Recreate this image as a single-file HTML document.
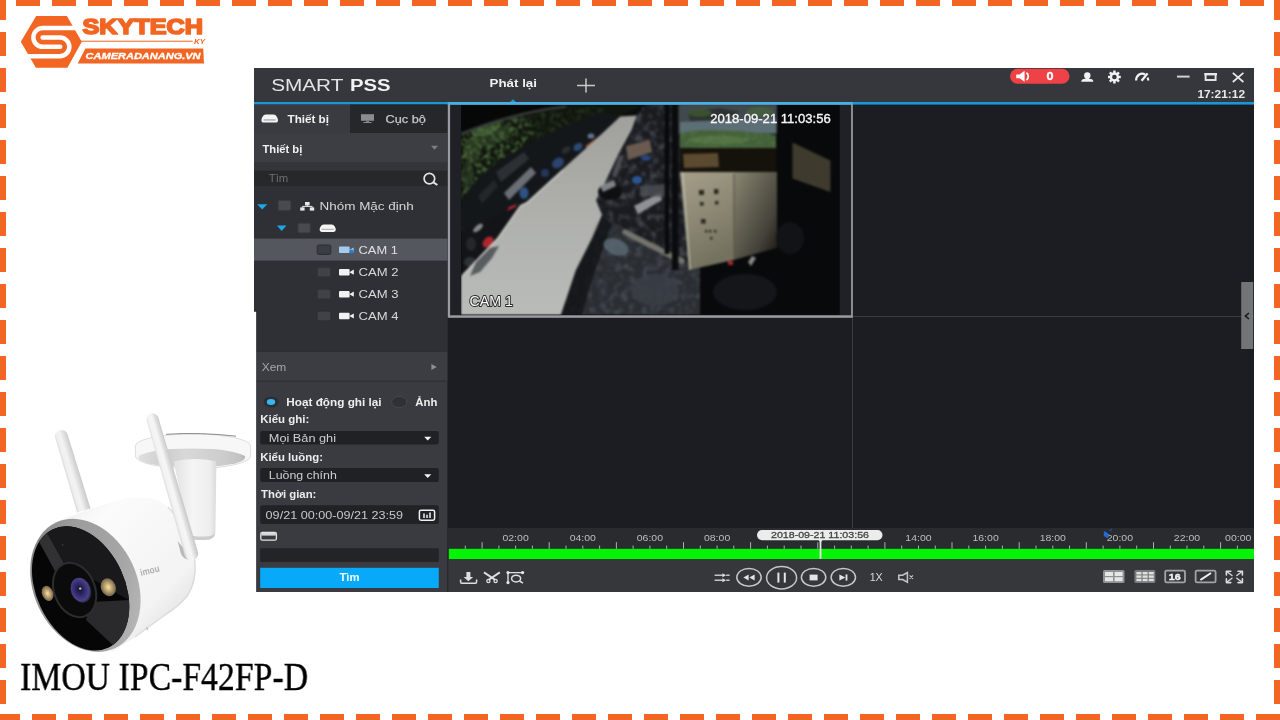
<!DOCTYPE html>
<html lang="vi">
<head>
<meta charset="utf-8">
<title>SmartPSS - IMOU IPC-F42FP-D</title>
<style>
*{box-sizing:border-box;margin:0;padding:0}
html,body{width:1280px;height:720px;overflow:hidden;background:#fff}
body{position:relative;font-family:"Liberation Sans",sans-serif;color:#d8d8d8}
.abs{position:absolute}
svg.abs,#caption{will-change:transform}
/* dashed frame */
.dash{position:absolute;--o:#f26522}
.dash.t{left:16px;top:0;width:1248px;height:6px;background:repeating-linear-gradient(90deg,var(--o) 0 24px,transparent 24px 36px)}
.dash.b{left:-4px;top:714px;width:1284px;height:6px;background:repeating-linear-gradient(90deg,var(--o) 0 24px,transparent 24px 36px)}
.dash.l{left:0;top:-4px;width:6px;height:724px;background:repeating-linear-gradient(180deg,var(--o) 0 24px,transparent 24px 36px)}
.dash.r{left:1274px;top:-4px;width:6px;height:724px;background:repeating-linear-gradient(180deg,var(--o) 0 24px,transparent 24px 36px)}
#caption{position:absolute;left:19.5px;top:654px;transform:scaleX(.866);-webkit-text-stroke:.4px #000;font-family:"Liberation Serif",serif;font-size:39px;color:#000;white-space:nowrap;transform-origin:0 0}
</style>
</head>
<body>
<div class="dash t"></div><div class="dash b"></div><div class="dash l"></div><div class="dash r"></div>

<svg class="abs" id="logo" style="left:0;top:0" width="230" height="80" viewBox="0 0 230 80">
<polygon points="20.8,41.7 36.2,16 66.9,16 81.8,41.7 67.4,67.8 35.9,67.8" fill="#f26522"/>
<path d="M78,28 H42.8 A9.4,9.4 0 0 0 42.8,46.8 H60.2" fill="none" stroke="#fff" stroke-width="4.5" stroke-linecap="round"/>
<path d="M42.6,37.5 H60 A9.35,9.35 0 0 1 60,56.2 H26" fill="none" stroke="#fff" stroke-width="4.5" stroke-linecap="round"/>
<text x="82.4" y="33.9" font-family="Liberation Sans, sans-serif" font-weight="bold" font-size="21.4" fill="#f26522" stroke="#f26522" stroke-width="1.7" stroke-linejoin="round" textLength="120.6" lengthAdjust="spacingAndGlyphs">SKYTECH</text>
<rect x="80" y="40.7" width="112.6" height="1" fill="#f26522"/>
<text x="194" y="44" font-family="Liberation Sans, sans-serif" font-weight="bold" font-style="italic" font-size="6.6" fill="#f26522" textLength="11" lengthAdjust="spacingAndGlyphs">KY</text>
<polygon points="85.4,48.5 203.2,48.5 204,63.6 77.7,63.6" fill="#f26522"/>
<text x="85.6" y="59.2" font-family="Liberation Sans, sans-serif" font-weight="bold" font-style="italic" font-size="8.4" fill="#fff" stroke="#fff" stroke-width="0.3" textLength="115" lengthAdjust="spacingAndGlyphs">CAMERADANANG.VN</text>
</svg>
<svg class="abs" id="appsvg" style="left:0;top:0" width="1280" height="720" viewBox="0 0 1280 720" font-family="Liberation Sans, sans-serif">
<defs>
<clipPath id="appclip"><path d="M254,68 H1254 V592 H256.4 V311.5 H254 Z"/></clipPath>
</defs>
<g clip-path="url(#appclip)">
<!-- main background -->
<rect x="254" y="68" width="1000" height="524" fill="#1b1d22"/>
<!-- title bar -->
<rect x="254" y="68" width="1000" height="35" fill="#35373c"/>
<rect x="254" y="102" width="1000" height="2.6" fill="#1d97d4"/>
<polygon points="509.5,102.5 513,99.3 516.5,102.5" fill="#1d97d4"/>
<text x="271.2" y="90.9" font-size="16" fill="#e4e4e4" textLength="72.2" lengthAdjust="spacingAndGlyphs">SMART</text>
<text x="350" y="90.9" font-size="16" font-weight="bold" fill="#f2f2f2" textLength="40.6" lengthAdjust="spacingAndGlyphs">PSS</text>
<text x="489.5" y="87" font-size="11" font-weight="bold" fill="#f0f0f0" textLength="47.5" lengthAdjust="spacingAndGlyphs">Phát lại</text>
<path d="M577,85.6 H595 M586,78.6 V92.6" stroke="#c9c9c9" stroke-width="1.5" fill="none"/>
<!-- alarm pill -->
<rect x="1010" y="68.8" width="59.5" height="15" rx="7.5" fill="#ee4246"/>
<path d="M1016.2,74.4 h3.4 l5,-3.6 v11 l-5,-3.6 h-3.4 z" fill="#fff"/>
<path d="M1026.4,72.8 a4.4,4.4 0 0 1 0,7.2" stroke="#fff" stroke-width="1.7" fill="none"/>
<text x="1046.4" y="79.8" font-size="10.6" font-weight="bold" fill="#fff" stroke="#fff" stroke-width="0.4" textLength="7" lengthAdjust="spacingAndGlyphs">0</text>
<!-- user -->
<circle cx="1087.3" cy="75.5" r="3.2" fill="#f2f2f2"/>
<rect x="1085.6" y="77.4" width="3.4" height="2.4" fill="#f2f2f2"/>
<path d="M1081.2,81.7 q0.2,-2.9 4,-3 h4.2 q3.8,0.1 4,3 z" fill="#f2f2f2"/>
<!-- gear -->
<g transform="translate(1114.4,77)" fill="none" stroke="#f2f2f2">
<circle r="3.5" stroke-width="2.4"/>
<path d="M0,-6.4V-4M0,6.4V4M-6.4,0H-4M6.4,0H4M-4.55,-4.55L-2.9,-2.9M4.55,4.55L2.9,2.9M-4.55,4.55L-2.9,2.9M4.55,-4.55L2.9,-2.9" stroke-width="2.5"/>
</g>
<!-- gauge -->
<g fill="none" stroke="#f2f2f2" stroke-width="2.2">
<path d="M1136.1,80.6 A6,7 0 0 1 1145.2,74.6"/>
<path d="M1147.6,77.6 A6,7 0 0 1 1148.2,80.6"/>
<path d="M1141.6,80.8 L1147.6,73.4" stroke-width="2.3"/>
</g>
<!-- window buttons -->
<rect x="1177" y="75.6" width="12.6" height="2" fill="#d0d0d0"/>
<rect x="1205.6" y="74" width="10" height="6" fill="none" stroke="#e8e8e8" stroke-width="1.9"/>
<rect x="1204.4" y="73" width="12.6" height="2.4" fill="#e8e8e8"/>
<path d="M1232.8,72.8 L1243.4,82 M1243.4,72.8 L1232.8,82" stroke="#e8e8e8" stroke-width="1.7" fill="none"/>
<text x="1197.4" y="98.4" font-size="10.4" font-weight="bold" fill="#e8e8e8" textLength="47.6" lengthAdjust="spacingAndGlyphs">17:21:12</text>

<!-- sidebar -->
<rect x="254" y="104.6" width="193.4" height="488" fill="#393b40"/>
<rect x="350" y="104.6" width="97.4" height="28.4" fill="#25272b"/>
<rect x="254" y="133" width="193.4" height="29.5" fill="#3c3e43"/>
<rect x="254" y="162.5" width="193.4" height="8" fill="#33353a"/>
<rect x="254" y="170.5" width="193.4" height="16" fill="#26282c"/>
<rect x="254" y="186.5" width="193.4" height="165" fill="#2e3035"/>
<rect x="254" y="238.6" width="193.4" height="22" fill="#54575e"/>
<rect x="254" y="351.3" width="193.4" height="30" fill="#3b3d42"/>
<rect x="254" y="351" width="193.4" height="1" fill="#2c2e32"/>
<rect x="254" y="380.6" width="193.4" height="1" fill="#2c2e32"/>
<!-- tabs -->
<path d="M261.4,120.4 q0,-2 1.2,-3.6 q1,-2.4 3.4,-2.4 h7.4 q2.4,0 3.4,2.4 q1.2,1.6 1.2,3.6 q0,2.2 -2.2,2.2 h-12.2 q-2.2,0 -2.2,-2.2 z" fill="#f4f4f4"/>
<rect x="263.6" y="119.4" width="12" height="1.1" fill="#9a9a9a"/>
<text x="287.5" y="122.6" font-size="11.4" font-weight="bold" fill="#f2f2f2" textLength="41.5" lengthAdjust="spacingAndGlyphs">Thiết bị</text>
<rect x="361" y="114.2" width="13" height="6.6" fill="#8a8c90"/>
<rect x="366" y="120.8" width="3" height="1.4" fill="#77797d"/>
<rect x="363.4" y="122" width="8.2" height="1" fill="#8a8c90"/>
<text x="385.6" y="122.6" font-size="11.4" fill="#c8c8c8" stroke="#c8c8c8" stroke-width="0.25" textLength="40.2" lengthAdjust="spacingAndGlyphs">Cục bộ</text>
<text x="262.5" y="152.6" font-size="11.4" font-weight="bold" fill="#f2f2f2" textLength="39.8" lengthAdjust="spacingAndGlyphs">Thiết bị</text>
<polygon points="431,145.8 438,145.8 434.5,149.8" fill="#7c7e82"/>
<!-- search -->
<text x="268.8" y="182.4" font-size="10.5" fill="#6e7074" textLength="19.5" lengthAdjust="spacingAndGlyphs">Tìm</text>
<circle cx="429.4" cy="178.6" r="5.3" fill="none" stroke="#e2e2e2" stroke-width="1.7"/>
<path d="M433.4,182.4 L437.4,185" stroke="#e2e2e2" stroke-width="2" fill="none"/>
<!-- tree -->
<polygon points="257.2,204.2 267.2,204.2 262.2,209.6" fill="#1ea7e8"/>
<rect x="278.2" y="200.4" width="12.6" height="10" rx="1.5" fill="#484a4f" stroke="#3a3c41" stroke-width="1"/>
<g fill="#e8e8e8"><rect x="305" y="202" width="4.6" height="3.4"/><rect x="300.2" y="207.4" width="4.4" height="3.2"/><rect x="309.8" y="207.4" width="4.4" height="3.2"/><path d="M307.3,205 v1.6 M302.4,207.6 v-1.2 h9.8 v1.2" stroke="#e8e8e8" stroke-width="1" fill="none"/></g>
<text x="319.5" y="210" font-size="11.5" fill="#d6d6d6" textLength="94.3" lengthAdjust="spacingAndGlyphs">Nhóm Mặc định</text>
<polygon points="277,225.6 286.4,225.6 281.7,230.9" fill="#1ea7e8"/>
<rect x="298" y="223.2" width="12.2" height="9.6" rx="1.5" fill="#484a4f" stroke="#3a3c41" stroke-width="1"/>
<path d="M319.6,229.8 q0,-1.8 1.1,-3.2 q0.9,-2.1 3,-2.1 h8 q2.1,0 3,2.1 q1.1,1.4 1.1,3.2 q0,2.1 -2.1,2.1 h-12 q-2.1,0 -2.1,-2.1 z" fill="#f4f4f4"/>
<rect x="321.6" y="228.8" width="12.2" height="1" fill="#aaa"/>
<!-- cam rows -->
<rect x="317.2" y="245" width="13.6" height="9.4" rx="1.5" fill="#3b3d44" stroke="#2b2d32" stroke-width="1"/>
<rect x="339" y="246.6" width="10.6" height="6.4" rx="1" fill="#a4cbec"/><polygon points="349.6,249.8 353.6,247.4 353.6,252.6" fill="#a4cbec"/><circle cx="351.6" cy="251.6" r="2" fill="#1f7fe0"/>
<text x="358.6" y="253.5" font-size="11" fill="#e0e0e0" textLength="39.2" lengthAdjust="spacingAndGlyphs">CAM 1</text>
<g id="camrow2">
<rect x="317.4" y="267.6" width="13.2" height="9.2" rx="1.5" fill="#404247" stroke="#33353a" stroke-width="1"/>
<rect x="339" y="269" width="10.6" height="6.4" rx="1" fill="#f2f2f2"/><polygon points="349.4,272.2 353.8,269.6 353.8,274.8" fill="#f2f2f2"/>
<text x="358.6" y="276" font-size="11" fill="#d8d8d8" textLength="40" lengthAdjust="spacingAndGlyphs">CAM 2</text>
</g>
<g transform="translate(0,22)">
<rect x="317.4" y="267.6" width="13.2" height="9.2" rx="1.5" fill="#404247" stroke="#33353a" stroke-width="1"/>
<rect x="339" y="269" width="10.6" height="6.4" rx="1" fill="#f2f2f2"/><polygon points="349.4,272.2 353.8,269.6 353.8,274.8" fill="#f2f2f2"/>
<text x="358.6" y="276" font-size="11" fill="#d8d8d8" textLength="40" lengthAdjust="spacingAndGlyphs">CAM 3</text>
</g>
<g transform="translate(0,43.8)">
<rect x="317.4" y="267.6" width="13.2" height="9.2" rx="1.5" fill="#404247" stroke="#33353a" stroke-width="1"/>
<rect x="339" y="269" width="10.6" height="6.4" rx="1" fill="#f2f2f2"/><polygon points="349.4,272.2 353.8,269.6 353.8,274.8" fill="#f2f2f2"/>
<text x="358.6" y="276" font-size="11" fill="#d8d8d8" textLength="40" lengthAdjust="spacingAndGlyphs">CAM 4</text>
</g>
<!-- Xem -->
<text x="261.7" y="370.8" font-size="10.8" fill="#a4a6aa" textLength="24.6" lengthAdjust="spacingAndGlyphs">Xem</text>
<polygon points="431.4,364 436.8,367 431.4,370" fill="#8c8e92"/>
<!-- radios -->
<ellipse cx="271.2" cy="402" rx="7.6" ry="5.6" fill="#2c2e33"/>
<ellipse cx="271" cy="402" rx="4.2" ry="3" fill="#38b6f2"/>
<text x="286.3" y="405.6" font-size="11.2" font-weight="bold" fill="#eeeeee" textLength="95.3" lengthAdjust="spacingAndGlyphs">Hoạt động ghi lại</text>
<ellipse cx="399.2" cy="402" rx="7.6" ry="5.6" fill="#2f3136" stroke="#44464b" stroke-width="1"/>
<text x="415.3" y="405.6" font-size="11.2" font-weight="bold" fill="#eeeeee" textLength="22" lengthAdjust="spacingAndGlyphs">Ảnh</text>
<!-- form -->
<text x="260.2" y="423.4" font-size="11.2" font-weight="bold" fill="#ececec" textLength="49.2" lengthAdjust="spacingAndGlyphs">Kiểu ghi:</text>
<rect x="260.2" y="431" width="178.6" height="13.6" rx="2" fill="#1f2125"/>
<text x="268.8" y="441.9" font-size="11" fill="#cfcfcf" textLength="67.2" lengthAdjust="spacingAndGlyphs">Mọi Bản ghi</text>
<polygon points="424.2,436.7 431.3,436.7 427.7,440.4" fill="#f4f4f4"/>
<text x="260.2" y="460.6" font-size="11.2" font-weight="bold" fill="#ececec" textLength="62.8" lengthAdjust="spacingAndGlyphs">Kiểu luồng:</text>
<rect x="260.2" y="468" width="178.6" height="14" rx="2" fill="#1f2125"/>
<text x="268.8" y="479" font-size="11" fill="#cfcfcf" textLength="68" lengthAdjust="spacingAndGlyphs">Luồng chính</text>
<polygon points="424.2,474.2 431.3,474.2 427.7,477.9" fill="#f4f4f4"/>
<text x="261" y="498" font-size="11.2" font-weight="bold" fill="#ececec" textLength="55.4" lengthAdjust="spacingAndGlyphs">Thời gian:</text>
<rect x="260.2" y="505.2" width="178.6" height="18.8" rx="2" fill="#202226"/>
<text x="265.6" y="519.2" font-size="11.8" fill="#c8c8c8" textLength="137.5" lengthAdjust="spacingAndGlyphs">09/21 00:00-09/21 23:59</text>
<rect x="419.4" y="510.2" width="15.2" height="10" rx="1.6" fill="none" stroke="#f0f0f0" stroke-width="1.5"/>
<path d="M424,513.4 v4.6 M427,514.8 v3.2 M430,512.6 v5.4" stroke="#e8e8e8" stroke-width="1.6" fill="none"/>
<rect x="260.8" y="532.4" width="15.6" height="7.8" rx="1.5" fill="none" stroke="#e4e4e4" stroke-width="1.3"/>
<rect x="261.4" y="533" width="14.4" height="2.6" fill="#d8d8d8"/>
<rect x="260.2" y="548.2" width="178.6" height="13.8" rx="1" fill="#222428"/>
<rect x="260.2" y="567.8" width="178.6" height="20.2" fill="#08a9f8"/>
<text x="339.4" y="581.2" font-size="11" font-weight="bold" fill="#f4fbff" textLength="20" lengthAdjust="spacingAndGlyphs">Tìm</text>

<!-- video grid -->
<rect x="852" y="104.6" width="1" height="424" fill="#3b3d41"/>
<rect x="448" y="316" width="806" height="1" fill="#393b3f"/>
<!-- video cell -->
<defs>
<clipPath id="vclip"><rect x="461" y="105" width="378.6" height="209.8"/></clipPath>
<filter id="vblur" color-interpolation-filters="sRGB" x="-5%" y="-5%" width="110%" height="110%"><feGaussianBlur stdDeviation="0.9"/></filter>
<filter id="leaf" color-interpolation-filters="sRGB" x="0" y="0" width="100%" height="100%">
<feTurbulence type="fractalNoise" baseFrequency="0.22" numOctaves="2" seed="7" result="n"/>
<feColorMatrix in="n" type="matrix" values="0 0 0 0 0.33  0 0 0 0 0.46  0 0 0 0 0.26  0 3.4 0 0 -1.45" result="c"/>
<feComposite in="c" in2="SourceGraphic" operator="in"/>
</filter>
<filter id="speck" color-interpolation-filters="sRGB" x="0" y="0" width="100%" height="100%">
<feTurbulence type="fractalNoise" baseFrequency="0.14" numOctaves="3" seed="3" result="n"/>
<feColorMatrix in="n" type="matrix" values="0 0 0 0 0.5  0 0 0 0 0.53  0 0 0 0 0.57  2.6 0 0 0 -1.15" result="c"/>
<feComposite in="c" in2="SourceGraphic" operator="in"/>
</filter>
<linearGradient id="road" x1="0" y1="0" x2="0" y2="1"><stop offset="0" stop-color="#a0a19c"/><stop offset="0.45" stop-color="#aeafab"/><stop offset="1" stop-color="#babcba"/></linearGradient>
<linearGradient id="boxL" x1="0" y1="0" x2="0.3" y2="1"><stop offset="0" stop-color="#a6a08a"/><stop offset="1" stop-color="#74725f"/></linearGradient>
<linearGradient id="boxR" x1="0" y1="0" x2="1" y2="1"><stop offset="0" stop-color="#8a8672"/><stop offset="0.7" stop-color="#45433a"/><stop offset="1" stop-color="#16150f"/></linearGradient>
</defs>
<rect x="447.8" y="104" width="405" height="213.8" fill="#9a9ca1"/>
<rect x="450.1" y="104.6" width="401" height="210.7" fill="#1f2126"/>
<rect x="447.8" y="102" width="405" height="2.6" fill="#46b0e6"/>
<g clip-path="url(#vclip)">
<rect x="461" y="105" width="379" height="210" fill="#0c0d0e"/>
<g filter="url(#vblur)">
<!-- trees -->
<polygon points="461,131 553,104 645,104 622,116 596,138 560,150 520,172 498,196 480,222 461,240" fill="#10150e"/>
<polygon points="461,134 520,114 536,122 528,150 504,170 488,190 474,214 461,232" fill="#fff" filter="url(#leaf)" opacity=".8"/>
<polygon points="520,114 600,106 610,116 560,140 528,150 536,122" fill="#fff" filter="url(#leaf)" opacity=".28"/>
<ellipse cx="492" cy="136" rx="20" ry="9" fill="#3f5a33" opacity=".45" transform="rotate(-18 492 136)"/>
<ellipse cx="472" cy="150" rx="9" ry="13" fill="#48663a" opacity=".4"/>
<ellipse cx="486" cy="128" rx="16" ry="7" fill="#5c8048" opacity=".45" transform="rotate(-20 486 128)"/>
<ellipse cx="468" cy="176" rx="6" ry="16" fill="#2c3c24" opacity=".6"/>
<!-- top-left black + roof arc -->
<polygon points="461,104 560,104 461,132" fill="#060707"/>
<path d="M461,133.8 Q512,112.6 566,106.6" stroke="#3a3d3e" stroke-width="2.2" fill="none"/>
<!-- vehicles strip along road -->
<polygon points="622,116 596,140 563,169 527,202 520,205 497,238 462,275 461,200 478,178 500,160 536,140 575,122 600,112" fill="#14171a"/>
<polygon points="504,193 531,167 536,173 509,200" fill="#6a6f75"/>
<polygon points="496,172 524,152 529,159 501,182" fill="#2c2f34"/>
<polygon points="478,196 494,180 498,186 482,204" fill="#23262a"/>
<ellipse cx="524" cy="193" rx="4.6" ry="6" fill="#2f5282"/>
<ellipse cx="558" cy="163" rx="6.4" ry="4.8" fill="#2a446e" transform="rotate(-35 558 163)"/>
<ellipse cx="545" cy="173" rx="4" ry="4" fill="#22385c"/>
<ellipse cx="578" cy="147" rx="5" ry="3.6" fill="#2c4a74" transform="rotate(-35 578 147)"/>
<ellipse cx="591" cy="136" rx="3.4" ry="2.6" fill="#5f7890"/>
<ellipse cx="566" cy="150" rx="5" ry="3" fill="#2a2d31" transform="rotate(-35 566 150)"/>
<path d="M586,147 L613.5,127.5" stroke="#a0563c" stroke-width="2.2" fill="none"/>
<polygon points="509,207 517,204 513,212 506,214" fill="#b0283a"/>
<!-- left bottom bikes -->
<polygon points="461,232 520,205 497,238 462,276" fill="#121417"/>
<ellipse cx="488" cy="242" rx="6.4" ry="4.4" fill="#b02630" transform="rotate(-45 488 242)"/>
<ellipse cx="478" cy="228" rx="6" ry="2.6" fill="#85878a" transform="rotate(-40 478 228)"/>
<ellipse cx="470" cy="262" rx="6" ry="5" fill="#2e3237"/>
<ellipse cx="471" cy="244" rx="5" ry="7" fill="#24272b"/>
<!-- road -->
<polygon points="620.3,116.6 637,115.4 632,129.5 618.6,154 605.5,182 600,205 602.2,215 592.4,238 576,270.6 561,315 461,315 461,276 497.2,237.8 520.2,205 526.8,201.7 562.8,169 595.7,139.6" fill="url(#road)"/>
<path d="M463,275 L497.4,239 L520.4,206 L527,203 L563,170" stroke="#dadbd8" stroke-width="1.2" fill="none" opacity=".8"/>
<polygon points="476,262 490,248 499,246 492,258 480,272 470,276" fill="#3a3f44" opacity=".75"/>
<polygon points="596,222 590,240 574,272 566,300 574,300 584,268 598,238 602,222" fill="#a09a90" opacity=".55"/>
<!-- wet ground -->
<polygon points="602.2,215 592.4,238 576,270.6 561,315 700,315 700,262 683,262 650,244 620,225" fill="#2a2e33"/>
<polygon points="602.2,215 592.4,238 576,270.6 561,315 700,315 700,262 683,262 650,244 620,225" fill="#fff" filter="url(#speck)" opacity=".32"/>
<polygon points="602.2,215 592.4,238 576,270.6 561,315 582,315 592,280 604,246 612,224" fill="#121417" opacity=".85"/>
<ellipse cx="616" cy="247" rx="13" ry="8" fill="#5d6c77" opacity=".8" transform="rotate(20 616 247)"/>
<ellipse cx="655" cy="290" rx="24" ry="16" fill="#3b4047" opacity=".8"/>
<!-- motorcycle pile -->
<polygon points="637,115 632,129.5 618.6,154 605.5,182 596,200 602,215 620,225 650,244 683,262 690,262 684,172 680,140 680,104 645,104" fill="#191b1f"/>
<polygon points="637,115 632,129.5 618.6,154 605.5,182 596,200 602,215 620,225 650,244 683,262 690,262 684,172 680,140 680,104 645,104" fill="#fff" filter="url(#speck)" opacity=".42"/>
<polygon points="626,146 650,140 652,152 628,160" fill="#6a5a50"/>
<polygon points="612,175 620,155 624,156 616,178" fill="#4a4c50"/>
<ellipse cx="610" cy="192" rx="12" ry="8" fill="#0e0f11"/>
<polygon points="600,186 614,180 616,186 603,192" fill="#7f8387"/>
<polygon points="634,206 660,193 662,200 638,214" fill="#8e9296"/>
<ellipse cx="637" cy="180" rx="5" ry="4" fill="#2d5594"/>
<ellipse cx="646" cy="158" rx="5" ry="3" fill="#27457c"/>
<polygon points="640,186 665,184 665,197 640,196" fill="#4d5258" opacity=".8"/>
<path d="M625,232 L652,246 L682,261" stroke="#74746c" stroke-width="5.5" fill="none" stroke-linecap="round"/>
<!-- roof / background top right -->
<rect x="678" y="104" width="100" height="30" fill="#40494d"/>
<polygon points="680,122 776,118 776,133 680,134" fill="#5d6f76"/>
<polygon points="688,112 720,108 740,112 720,120 690,121" fill="#2c3230"/>
<ellipse cx="700" cy="113" rx="12" ry="4" fill="#3e5830" opacity=".8"/>
<ellipse cx="760" cy="112" rx="14" ry="5" fill="#4a6a3a" opacity=".6"/>
<!-- green plants -->
<polygon points="680,133 700,130 740,131 776,135 776,148 680,148" fill="#43603a"/>
<polygon points="680,133 700,130 740,131 776,135 776,148 680,148" fill="#fff" filter="url(#leaf)" opacity=".6"/>
<ellipse cx="718" cy="140" rx="30" ry="4.4" fill="#7a9c5c" opacity=".3"/>
<!-- box -->
<polygon points="680,148 776,148 776,172 680,172" fill="#15120c"/>
<polygon points="683,154 718,153 719,167 684,168" fill="#5c4a30"/>
<polygon points="680,172 734,172 734,260 689,270 684,215" fill="url(#boxL)"/>
<polygon points="734,172 777,172 777,248 734,260" fill="url(#boxR)"/>
<path d="M682.4,172 L686,216 L690,270" stroke="#c2c2b4" stroke-width="1.6" fill="none" opacity=".8"/>
<path d="M734,174 V258" stroke="#5a584c" stroke-width="1.2"/>
<g fill="#2a2a24"><rect x="699" y="190" width="5" height="5"/><rect x="714" y="189" width="4.4" height="5"/><rect x="700" y="202" width="3.6" height="3.6"/><rect x="715" y="201" width="3.4" height="3.4"/><rect x="701" y="219" width="4.6" height="4.6"/><rect x="705" y="230" width="2.4" height="2.4"/><rect x="709" y="230" width="2.4" height="2.4"/><rect x="714" y="230" width="2.4" height="2.4"/><rect x="710" y="237" width="2.4" height="2.4"/></g>
<!-- pole -->
<rect x="664.6" y="104" width="4.6" height="150" fill="#08090a"/>
<rect x="672" y="104" width="6.4" height="166" fill="#0a0b0c"/>
<!-- right dark + wall -->
<polygon points="777,104 840,104 840,315 700,315 700,268 734,260 777,248" fill="#08090a"/>
<polygon points="792.5,142.5 830.4,160.6 830.4,192 792.5,178.6" fill="#3e3b2e"/>
<ellipse cx="745" cy="292" rx="32" ry="18" fill="#14161a"/>
<ellipse cx="790" cy="238" rx="14" ry="16" fill="#121316"/>
<polygon points="748,262 752,256 756,258 751,266" fill="#8a8a84"/>
<rect x="728" y="261" width="5" height="4" fill="#a02a2a"/>
</g>
<!-- OSD text -->
<text x="710.3" y="122.6" font-size="12.4" fill="#f6f6f6" stroke="#f6f6f6" stroke-width="0.35" textLength="120.4" lengthAdjust="spacingAndGlyphs">2018-09-21 11:03:56</text>
<text x="469.6" y="306" font-size="14.4" fill="#fafafa" stroke="#2a2a2a" stroke-width="2" paint-order="stroke" stroke-linejoin="round" textLength="43.2" lengthAdjust="spacingAndGlyphs">CAM 1</text>
</g>

<!-- right handle -->
<rect x="1241.2" y="282" width="12" height="67" fill="#727476"/>
<path d="M1249,313 l-3.6,3 l3.6,3" stroke="#17181b" stroke-width="1.6" fill="none"/>

<!-- timeline -->
<rect x="448" y="528" width="806" height="21" fill="#292b2f"/>
<rect x="448.6" y="548.8" width="805.4" height="10.5" fill="#05f305"/>
<rect x="448" y="559.3" width="806" height="33" fill="#35373b"/>
<rect x="447.4" y="528" width="1" height="64" fill="#2a2c30"/>
<g id="ticks" stroke="#adafb1" stroke-width="1"><path d="M465.3,545.6V548.8M482.1,542.2V548.8M498.9,545.6V548.8M515.6,545.6V548.8M532.4,545.6V548.8M549.2,542.2V548.8M566.0,545.6V548.8M582.8,545.6V548.8M599.6,545.6V548.8M616.4,542.2V548.8M633.1,545.6V548.8M649.9,545.6V548.8M666.7,545.6V548.8M683.5,542.2V548.8M700.3,545.6V548.8M717.1,545.6V548.8M733.8,545.6V548.8M750.6,542.2V548.8M767.4,545.6V548.8M784.2,545.6V548.8M801.0,545.6V548.8M817.8,542.2V548.8M834.6,545.6V548.8M851.3,545.6V548.8M868.1,545.6V548.8M884.9,542.2V548.8M901.7,545.6V548.8M918.5,545.6V548.8M935.3,545.6V548.8M952.0,542.2V548.8M968.8,545.6V548.8M985.6,545.6V548.8M1002.4,545.6V548.8M1019.2,542.2V548.8M1036.0,545.6V548.8M1052.8,545.6V548.8M1069.5,545.6V548.8M1086.3,542.2V548.8M1103.1,545.6V548.8M1119.9,545.6V548.8M1136.7,545.6V548.8M1153.5,542.2V548.8M1170.3,545.6V548.8M1187.0,545.6V548.8M1203.8,545.6V548.8M1220.6,542.2V548.8M1237.4,545.6V548.8"/></g>
<g font-size="9.6" fill="#bdbdbd" text-anchor="middle"><text x="515.6" y="541.2" textLength="26.3" lengthAdjust="spacingAndGlyphs">02:00</text>
<text x="582.8" y="541.2" textLength="26.3" lengthAdjust="spacingAndGlyphs">04:00</text>
<text x="649.9" y="541.2" textLength="26.3" lengthAdjust="spacingAndGlyphs">06:00</text>
<text x="717.1" y="541.2" textLength="26.3" lengthAdjust="spacingAndGlyphs">08:00</text>
<text x="918.5" y="541.2" textLength="26.3" lengthAdjust="spacingAndGlyphs">14:00</text>
<text x="985.6" y="541.2" textLength="26.3" lengthAdjust="spacingAndGlyphs">16:00</text>
<text x="1052.8" y="541.2" textLength="26.3" lengthAdjust="spacingAndGlyphs">18:00</text>
<text x="1119.9" y="541.2" textLength="26.3" lengthAdjust="spacingAndGlyphs">20:00</text>
<text x="1187.0" y="541.2" textLength="26.3" lengthAdjust="spacingAndGlyphs">22:00</text>
<text x="1238.2" y="541.2" textLength="26.3" lengthAdjust="spacingAndGlyphs">00:00</text></g>
<rect x="757" y="530" width="125.5" height="10.2" rx="5.1" fill="#ececec"/>
<text x="771" y="538.4" font-size="9.2" fill="#444" stroke="#444" stroke-width="0.3" textLength="98" lengthAdjust="spacingAndGlyphs">2018-09-21 11:03:56</text>
<polygon points="818.2,539.8 822.8,539.8 820.5,542.6" fill="#ececec"/>
<rect x="819.6" y="540" width="1.8" height="18.8" fill="#e8e8e8"/>
<path d="M1104.6,531.6 l4.6,3.2 l-3,0.6 l1.6,2.4 l-2,-1 l-1.8,-1.4 z M1109.4,529.6 l1.6,1.8 M1111.6,528.8 l-0.6,1.2" fill="#1f6fe8" stroke="#1f6fe8" stroke-width="0.8"/>
<!-- bottom toolbar : left -->
<g fill="none" stroke="#dedede" stroke-width="1.5">
<path d="M460.6,579.6 v2.4 q0,1.2 1.2,1.2 h13.6 q1.2,0 1.2,-1.2 v-2.4"/>
<path d="M484,572.4 L495.4,580 M499.8,572.4 L488.4,580" stroke-width="1.9"/>
<circle cx="488.4" cy="581" r="1.6" stroke-width="1.3"/><circle cx="495.6" cy="581" r="1.6" stroke-width="1.3"/>
<path d="M508,582.6 V572.6 H522.6" stroke-width="1.4"/>
<ellipse cx="516.1" cy="578.6" rx="4.5" ry="3.4"/>
<path d="M519.6,581 L523,583.2"/>
</g>
<path d="M466.4,572 h4 v5 h2.8 l-4.8,4.2 l-4.8,-4.2 h2.8 z" fill="#dedede"/>
<g fill="#e8e8e8"><circle cx="508" cy="572.6" r="1.6"/><circle cx="522.6" cy="572.6" r="1.6"/><circle cx="508" cy="582.6" r="1.6"/></g>
<!-- centre controls -->
<g fill="none" stroke="#c6c6c6" stroke-width="1.5">
<path d="M714.6,575.2 h8 M726.2,575.2 h3.4 M714.6,580.2 h8 M726.2,580.2 h3.4"/>
<ellipse cx="749" cy="577.3" rx="12.2" ry="8.9"/>
<ellipse cx="781.6" cy="577.8" rx="15" ry="11.2"/>
<ellipse cx="813.6" cy="577.3" rx="12.2" ry="8.9"/>
<ellipse cx="843.3" cy="577.3" rx="12.2" ry="8.9"/>
<path d="M898.8,575.2 h3.8 l4.8,-2.6 v9.6 l-4.8,-2.6 h-3.8 z"/>
<path d="M909.6,575.4 l3.4,3.4 M913,575.4 l-3.4,3.4" stroke-width="1.1"/>
</g>
<g fill="#e4e4e4">
<polygon points="722.4,573.2 726,575.2 722.4,577.2"/><polygon points="722.4,578.2 726,580.2 722.4,582.2"/>
<polygon points="748.6,574.4 748.6,580.6 743.4,577.5"/><polygon points="754.6,574.4 754.6,580.6 749.4,577.5"/>
<rect x="777.4" y="572.6" width="2" height="10"/><rect x="783.8" y="572.6" width="2" height="10"/>
<rect x="809.6" y="574.6" width="8" height="5.8"/>
<polygon points="839.4,574.4 845.4,577.5 839.4,580.6"/><rect x="845.6" y="574.4" width="1.8" height="6.2"/>
</g>
<text x="869.7" y="581" font-size="10" fill="#dadada" textLength="13" lengthAdjust="spacingAndGlyphs">1X</text>
<!-- right controls -->
<rect x="1103" y="570" width="21.5" height="13" rx="1.5" fill="#8f9194"/>
<g fill="#e6e6e6"><rect x="1105" y="572" width="8" height="4"/><rect x="1114.6" y="572" width="8" height="4"/><rect x="1105" y="577.2" width="8" height="4"/><rect x="1114.6" y="577.2" width="8" height="4"/></g>
<rect x="1134.4" y="570" width="21" height="13" rx="1.5" fill="#777a7d"/>
<g fill="#e0e0e0"><rect x="1136.4" y="572" width="5" height="2.4"/><rect x="1142.6" y="572" width="5" height="2.4"/><rect x="1148.8" y="572" width="5" height="2.4"/><rect x="1136.4" y="575.4" width="5" height="2.4"/><rect x="1142.6" y="575.4" width="5" height="2.4"/><rect x="1148.8" y="575.4" width="5" height="2.4"/><rect x="1136.4" y="578.8" width="5" height="2.4"/><rect x="1142.6" y="578.8" width="5" height="2.4"/><rect x="1148.8" y="578.8" width="5" height="2.4"/></g>
<rect x="1165.2" y="570.6" width="19.8" height="11.8" rx="1.5" fill="none" stroke="#a2a4a6" stroke-width="1.8"/>
<text x="1168.8" y="580.2" font-size="9.8" font-weight="bold" fill="#f2f2f2" stroke="#f2f2f2" stroke-width="0.4" textLength="11.8" lengthAdjust="spacingAndGlyphs">16</text>
<rect x="1195.6" y="570.6" width="20" height="11.8" rx="1.5" fill="none" stroke="#a2a4a6" stroke-width="1.8"/>
<path d="M1200.4,580 L1211,573" stroke="#f0f0f0" stroke-width="2" fill="none"/>
<g fill="none" stroke="#dcdcdc" stroke-width="1.6" stroke-linecap="round" stroke-linejoin="round">
<path d="M1226.4,575 v-3.8 h4.4 M1238,571.2 h4.4 v3.8 M1242.4,578.8 v3.8 h-4.4 M1230.8,582.6 h-4.4 v-3.8"/>
<path d="M1227,571.8 l5,3.8 M1241.8,571.8 l-5,3.8 M1241.8,582 l-5,-3.8 M1227,582 l5,-3.8" stroke-width="1.3"/>
</g>
</g>
</svg>

<svg class="abs" id="product" style="left:0;top:0" width="1280" height="720" viewBox="0 0 1280 720">
<defs>
<linearGradient id="pBody" x1="0" y1="0" x2="1" y2="1"><stop offset="0" stop-color="#e9e9e9"/><stop offset="0.25" stop-color="#fbfbfb"/><stop offset="0.7" stop-color="#f3f3f3"/><stop offset="1" stop-color="#d2d2d2"/></linearGradient>
<linearGradient id="pRing" x1="0" y1="0" x2="1" y2="1"><stop offset="0" stop-color="#7a7a7a"/><stop offset="0.35" stop-color="#9c9c9c"/><stop offset="0.7" stop-color="#a6a6a6"/><stop offset="1" stop-color="#c2c2c2"/></linearGradient>
<linearGradient id="pNeck" x1="0" y1="0" x2="1" y2="0"><stop offset="0" stop-color="#e2e2e2"/><stop offset="0.45" stop-color="#f5f5f5"/><stop offset="0.85" stop-color="#eeeeee"/><stop offset="1" stop-color="#dadada"/></linearGradient>
<linearGradient id="antL" gradientUnits="userSpaceOnUse" x1="77.15" y1="512.52" x2="90.55" y2="508.48"><stop offset="0" stop-color="#d9d9d9"/><stop offset="0.18" stop-color="#efefef"/><stop offset="0.45" stop-color="#f3f3f3"/><stop offset="0.72" stop-color="#dedede"/><stop offset="1" stop-color="#c9c9c9"/></linearGradient>
<linearGradient id="antR" gradientUnits="userSpaceOnUse" x1="184.07" y1="552.89" x2="197.13" y2="549.11"><stop offset="0" stop-color="#dadada"/><stop offset="0.2" stop-color="#f2f2f2"/><stop offset="0.5" stop-color="#f6f6f6"/><stop offset="0.75" stop-color="#dddddd"/><stop offset="1" stop-color="#c6c6c6"/></linearGradient>
<linearGradient id="pDisc" x1="0" y1="0" x2="1" y2="0"><stop offset="0" stop-color="#e0e0e0"/><stop offset="0.25" stop-color="#cdcdcd"/><stop offset="0.45" stop-color="#d8d8d8"/><stop offset="0.8" stop-color="#cccccc"/><stop offset="1" stop-color="#c0c0c0"/></linearGradient>
<radialGradient id="pLens" cx="0.45" cy="0.45" r="0.6"><stop offset="0" stop-color="#15131f"/><stop offset="0.35" stop-color="#2d2766"/><stop offset="0.75" stop-color="#4a4288"/><stop offset="1" stop-color="#15151d"/></radialGradient>
<radialGradient id="pLed" cx="0.5" cy="0.5" r="0.5"><stop offset="0" stop-color="#f3e3b4"/><stop offset="0.55" stop-color="#b99a62"/><stop offset="1" stop-color="#6a6458"/></radialGradient>
<clipPath id="faceclip"><ellipse cx="80.6" cy="588.4" rx="44.2" ry="65.4" transform="rotate(-25 80.6 588.4)"/></clipPath>
</defs>
<!-- mount disc -->
<path d="M135.4,446 A57.6,12 0 0 1 250.6,446 L250.6,456 A57.6,12.6 0 0 1 135.4,456 Z" fill="#f7f7f7"/>
<path d="M135.4,446 A57.6,12 0 0 1 250.6,446 L250.6,456 A57.6,12.6 0 0 1 135.4,456 Z" fill="none" stroke="#dadada" stroke-width="0.9"/>
<ellipse cx="191.6" cy="457.8" rx="53.4" ry="9.4" fill="url(#pDisc)"/>
<path d="M166,434.3 Q200,432 236,436.2" stroke="#6f6f6f" stroke-width="1" fill="none" opacity=".8"/>
<ellipse cx="243" cy="456.6" rx="2.2" ry="1" fill="#b8b8b8"/>
<!-- mount neck -->
<path d="M173.6,461.4 Q195,456.6 216.4,461.4 L215.4,531 Q214.8,540 206,540 L197,540 Q190,540 188.4,531 Z" fill="url(#pNeck)"/>
<path d="M188.6,532 Q190,540 197,540 L206,540 Q214.6,540 215.3,532 Q213,536.6 205,536.6 L198,536.6 Q191,536.6 188.6,532 Z" fill="#cdcdcd"/>
<!-- left antenna -->
<path d="M55.37,438.25 A6.4,6.4 0 0 1 67.63,434.55 L90.55,508.48 L77.15,512.52 Z" fill="url(#antL)"/>
<!-- body -->
<path d="M46,528 C60,518.6 92,507.6 125,498.4 C140,495.4 158,497.6 168,507 C180,520 193,544 195,562 C196,574 194.6,584 188,595 C182,603 172,610.6 165,615 C156,621.6 146,629 135,637 L112,652 L60,560 Z" fill="url(#pBody)"/>
<path d="M168,507 C180,520 193,544 195,562 C196,574 194.6,584 188,595 C182,603 172,610.6 165,615 C156,621.6 146,629 135,637" stroke="#d2d2d2" stroke-width="1.4" fill="none" opacity=".7"/>
<path d="M146,626.4 l2.6,2 l-1.6,2.2 z" fill="#bdbdbd"/>
<!-- imou mark -->
<text x="141" y="576" font-family="Liberation Sans, sans-serif" font-size="9.6" font-weight="bold" fill="#adadad" transform="rotate(-14 141 576)" textLength="19.6" lengthAdjust="spacingAndGlyphs">imou</text>
<!-- face ring -->
<ellipse cx="85.4" cy="585.4" rx="51.6" ry="69.4" transform="rotate(-25 85.4 585.4)" fill="url(#pRing)"/>
<ellipse cx="80.6" cy="588.4" rx="44.2" ry="65.4" transform="rotate(-25 80.6 588.4)" fill="#060606"/>
<g clip-path="url(#faceclip)">
<polygon points="45.8,530.8 66,518 100,528 130,568 132,602 94,580 66.7,568.3" fill="#19191b"/>
<polygon points="36,536 45.8,530.8 66.7,568.3 56,573" fill="#313134"/>
<polygon points="92,602 132,600 130,632 116,648 86,620" fill="#2a2a2d"/>
<ellipse cx="74.6" cy="590" rx="20.4" ry="28.2" transform="rotate(-22 74.6 590)" fill="#0b0b0c" stroke="#2d2d30" stroke-width="2"/>
<ellipse cx="81" cy="590.2" rx="10" ry="12.8" transform="rotate(-22 81 590.2)" fill="url(#pLens)"/>
<circle cx="80.2" cy="588.6" r="1.2" fill="#c8c0e0"/>
<ellipse cx="47.6" cy="593.4" rx="5.6" ry="7.8" transform="rotate(-22 47.6 593.4)" fill="url(#pLed)"/>
<ellipse cx="108.3" cy="587.2" rx="7.4" ry="9.2" transform="rotate(-22 108.3 587.2)" fill="url(#pLed)"/>
<circle cx="62.6" cy="545" r="0.9" fill="#3a3a3a"/>
</g>
<!-- right antenna (front) -->
<path d="M177.6,541 l3.4,13 q3,6 8,5.4 l-1,-6 z" fill="#b9b9b9"/>
<path d="M146.74,420.66 A6,6 0 0 1 158.26,417.34 L197.96,551.99 A6.8,6.8 0 0 1 184.9,555.77 Z" fill="url(#antR)"/>
</svg>

<div id="caption">IMOU IPC-F42FP-D</div>
</body>
</html>
